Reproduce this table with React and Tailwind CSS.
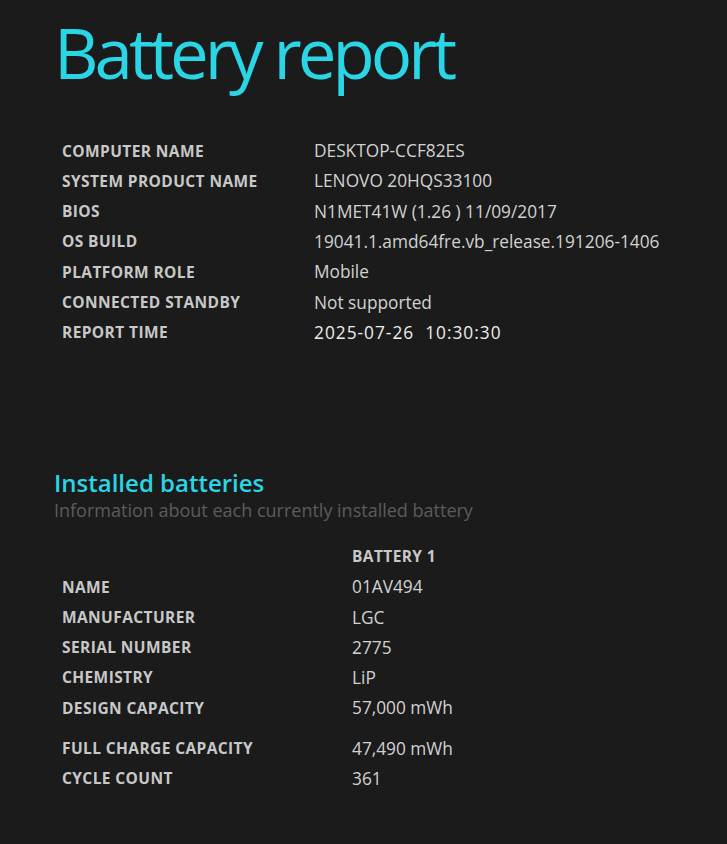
import React from "react";

const systemInfo = [
  ["COMPUTER NAME", "DESKTOP-CCF82ES"],
  ["SYSTEM PRODUCT NAME", "LENOVO 20HQS33100"],
  ["BIOS", "N1MET41W (1.26 ) 11/09/2017"],
  ["OS BUILD", "19041.1.amd64fre.vb_release.191206-1406"],
  ["PLATFORM ROLE", "Mobile"],
  ["CONNECTED STANDBY", "Not supported"],
];

const batteryInfo = [
  ["NAME", "01AV494"],
  ["MANUFACTURER", "LGC"],
  ["SERIAL NUMBER", "2775"],
  ["CHEMISTRY", "LiP"],
  ["DESIGN CAPACITY", "57,000 mWh"],
];

const Row = ({ label, value, labelWidth, bright }) => (
  <div className="flex items-center h-[30.3px]">
    <div
      className="text-[15.5px] font-bold text-[#c8c8c8] tracking-[0.4px]"
      style={{ width: labelWidth }}
    >
      {label}
    </div>
    <div
      className={
        bright
          ? "text-[17.3px] text-[#ededed] font-medium whitespace-pre tracking-[1px]"
          : "text-[17.3px] text-[#d2d2d2] whitespace-pre"
      }
    >
      {value}
    </div>
  </div>
);

export default function App() {
  return (
    <div className="min-h-screen bg-[#1b1b1b] font-['Open_Sans',sans-serif] pl-[54px] pt-[8px]">
      {/* Title */}
      <h1 className="text-[69px] leading-[88px] font-normal text-[#2ad5e5] tracking-[-4px]">
        Battery report
      </h1>

      {/* System info */}
      <div className="mt-[40px] pl-[8px]">
        {systemInfo.map(([l, v]) => (
          <Row key={l} label={l} value={v} labelWidth={252} />
        ))}
        <Row label="REPORT TIME" value="2025-07-26  10:30:30" labelWidth={252} bright />
      </div>

      {/* Installed batteries */}
      <div className="mt-[120px]">
        <h2 className="text-[24px] leading-[30px] font-semibold text-[#2ad5e5]">
          Installed batteries
        </h2>
        <p className="text-[18px] leading-[24px] text-[#5c5c5c]">
          Information about each currently installed battery
        </p>
      </div>

      <div className="mt-[20px] pl-[8px]">
        <div className="flex items-center h-[30px]">
          <div className="w-[290px]" />
          <div className="text-[15.5px] font-bold text-[#c8c8c8] tracking-[0.4px]">BATTERY 1</div>
        </div>
        {batteryInfo.map(([l, v]) => (
          <Row key={l} label={l} value={v} labelWidth={290} />
        ))}
        <div className="h-[10px]" />
        <Row label="FULL CHARGE CAPACITY" value="47,490 mWh" labelWidth={290} />
        <Row label="CYCLE COUNT" value="361" labelWidth={290} />
      </div>
    </div>
  );
}
